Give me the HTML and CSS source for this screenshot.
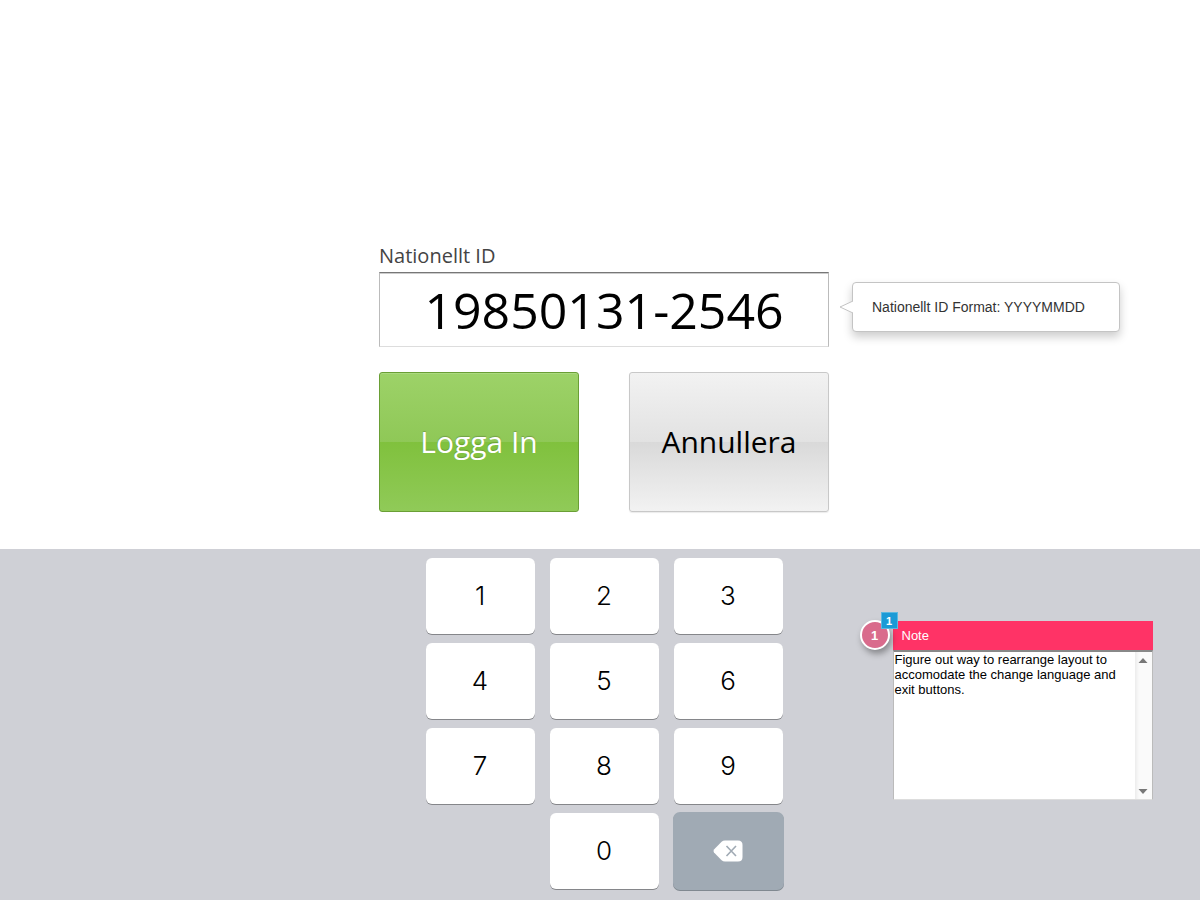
FILE: index.html
```
<!DOCTYPE html>
<html lang="sv">

<head>
    <meta charset="utf-8">
    <title>Logga In</title>
    <link rel="stylesheet" href="styles.css">
</head>

<body>
    <main>
        <form id="loginForm" onsubmit="return false">
            <label for="idInput">Nationellt ID</label>
            <div class="inputRow">
                <input type="text" id="idInput" value="19850131-2546" aria-describedby="idHint" />
                <div class="tooltip" id="idHint">
                    <svg class="tooltipArrow" width="14" height="14" viewBox="0 0 14 14">
                        <path d="M14 1 L1 7 L14 13" fill="#fff" stroke="#c4c4c4" />
                    </svg>
                    Nationellt ID Format: YYYYMMDD
                </div>
            </div>
            <div class="buttons">
                <button type="submit" class="login">Logga In</button>
                <button type="button" class="cancel">Annullera</button>
            </div>
        </form>
    </main>

    <section class="keyboard">
        <div class="keypad">
            <button type="button">1</button>
            <button type="button">2</button>
            <button type="button">3</button>
            <button type="button">4</button>
            <button type="button">5</button>
            <button type="button">6</button>
            <button type="button">7</button>
            <button type="button">8</button>
            <button type="button">9</button>
            <button type="button" class="zero">0</button>
            <button type="button" class="delete" aria-label="Radera">
                <svg width="30" height="22" viewBox="0 0 30 22">
                    <path d="M1 9.6 L8.6 1.7 Q10 .5 12 .5 H25 Q29.5 .5 29.5 5 V17 Q29.5 21.5 25 21.5 H12 Q10 21.5 8.6 20.3 L1 12.4 Q0 11 1 9.6 Z" fill="#fff" />
                    <path d="M13.5 6 L23 16 M23 6 L13.5 16" fill="none" stroke="#a0aab4" stroke-width="1.6" />
                </svg>
            </button>
        </div>

        <div class="note">
            <span class="pin">1</span>
            <span class="count">1</span>
            <label for="noteText">Note</label>
            <div class="noteBody">
                <textarea id="noteText">Figure out way to rearrange layout to accomodate the change language and exit buttons.</textarea>
                <div class="scroll">
                    <svg width="10" height="5" viewBox="0 0 10 5"><path d="M5 0 L9.5 5 H.5 Z" fill="#777" /></svg>
                    <svg width="10" height="5" viewBox="0 0 10 5"><path d="M5 5 L9.5 0 H.5 Z" fill="#777" /></svg>
                </div>
            </div>
        </div>
    </section>
</body>

</html>
```
FILE: styles.css
```
* {
    box-sizing: border-box;
}

body {
    display: flex;
    flex-direction: column;
    min-height: 100vh;
    margin: 0;
    background-color: #fff;
    font-family: "Open Sans", sans-serif;
}

button {
    padding: 0;
    cursor: pointer;
}

main {
    display: flex;
    flex: 1;
    justify-content: center;
    align-items: flex-end;
    padding: 0 0 37px 8px;
}

#loginForm {
    width: 450px;
}

#loginForm > label {
    display: block;
    color: #444;
    font-size: 20px;
    line-height: 32px;
}

.inputRow {
    position: relative;
    margin-bottom: 25px;
}

#idInput {
    display: block;
    width: 100%;
    height: 75px;
    padding: 0;
    border: 1px solid #bbb;
    border-top: 1px solid #777;
    border-bottom-color: #ddd;
    background-color: #fff;
    box-shadow: inset 0 1px #ccc;
    color: #000;
    font-family: inherit;
    font-size: 50px;
    text-align: center;
    outline: none;
}

.tooltip {
    position: absolute;
    top: 10px;
    left: calc(100% + 23px);
    width: 268px;
    padding: 0 19px;
    border: 1px solid #c4c4c4;
    border-radius: 4px;
    background-color: #fff;
    box-shadow: 0 5px 10px rgba(0, 0, 0, 0.2);
    color: #333;
    font-family: "Liberation Sans", sans-serif;
    font-size: 14px;
    line-height: 48px;
    white-space: nowrap;
}

.tooltipArrow {
    position: absolute;
    top: 17px;
    left: -14px;
}

.buttons {
    display: flex;
    justify-content: space-between;
}

.buttons button {
    width: 200px;
    height: 140px;
    padding-bottom: 2px;
    border-radius: 3px;
    font-family: inherit;
    font-size: 30px;
}

.login {
    border: 1px solid #6a9f35;
    background: linear-gradient(#9dd268, #8fc857 50%, #80c13d 50%, #90ca58);
    box-shadow: inset 0 1px #abd97f;
    color: #fff;
    text-shadow: 0 -1px 1px rgba(0, 0, 0, 0.2);
}

.cancel {
    border: 1px solid #c8c8c8;
    background: linear-gradient(#f2f2f2, #e2e2e2 50%, #d9d9d9 50%, #f2f2f2);
    box-shadow: 0 1px 1px rgba(0, 0, 0, 0.08);
    color: #000;
}

.keyboard {
    display: grid;
    grid-template-columns: 1fr auto 1fr;
    align-items: start;
    padding: 9px 0 11px 8px;
    background-color: #cfd0d6;
}

.keypad {
    display: grid;
    grid-template-columns: repeat(3, 109px);
    grid-column: 2;
    gap: 9px 15px;
}

.keypad button {
    height: 76px;
    padding-bottom: 2px;
    border: none;
    border-radius: 6px;
    background-color: #fff;
    box-shadow: 0 1px #85868a;
    color: #000;
    font-family: Inter, sans-serif;
    font-size: 26px;
    font-weight: 300;
}

.keypad .zero {
    grid-column: 2;
}

.keypad .delete {
    display: flex;
    justify-content: center;
    align-items: center;
    padding: 0;
    background-color: #a0aab4;
    box-shadow: 0 0 0 1px #a0aab4, 0 1px 0 1px #808890;
}

.note {
    position: relative;
    width: 260px;
    margin: 63px 0 0 110px;
    font-family: "Liberation Sans", sans-serif;
    font-size: 13px;
}

.note label {
    display: block;
    padding-left: 9px;
    background-color: #ff3366;
    color: #fff;
    line-height: 29px;
}

.noteBody {
    display: flex;
    height: 150px;
    border: 1px solid #bbb;
    border-top: 2px solid #888;
    border-bottom-color: #ddd;
    background-color: #fff;
}

#noteText {
    flex: 1;
    padding: 0 1px;
    border: none;
    background: none;
    color: #000;
    font: inherit;
    line-height: 15px;
    resize: none;
    outline: none;
    overflow: hidden;
}

.scroll {
    display: flex;
    flex-direction: column;
    justify-content: space-between;
    align-items: center;
    width: 17px;
    padding: 6px 0 5px;
    background: linear-gradient(to right, #ececec, #fafafa 4px);
}

.pin,
.count {
    position: absolute;
    color: #fff;
    font-weight: bold;
    text-align: center;
}

.pin {
    top: -1px;
    left: -33px;
    width: 30px;
    height: 30px;
    border: 2px solid #fff;
    border-radius: 50%;
    background-color: #d96b8c;
    box-shadow: 2px 4px 6px rgba(0, 0, 0, 0.35);
    line-height: 27px;
}

.count {
    top: -9px;
    left: -12px;
    width: 17px;
    height: 17px;
    border: 1px solid #5bb8e0;
    background-color: #1b9ad6;
    font-size: 11px;
    line-height: 16px;
}
```
